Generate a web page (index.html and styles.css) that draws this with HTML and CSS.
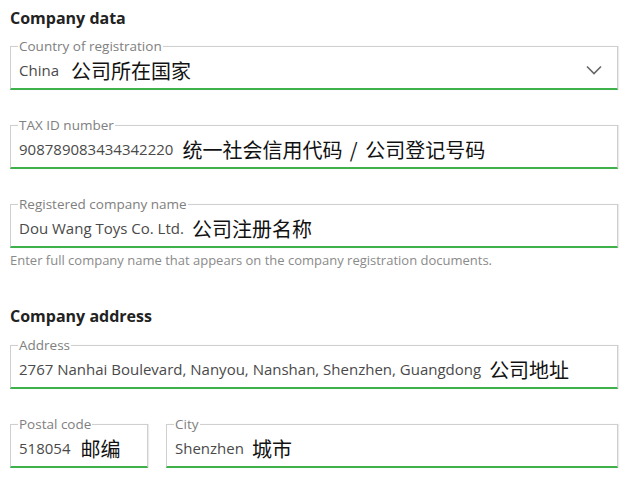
FILE: index.html
```html
<!DOCTYPE html>
<html>
<head>
<meta charset="utf-8">
<link rel="stylesheet" href="styles.css">
</head>
<body>
<div class="page">
  <h2 class="heading">Company data</h2>

  <fieldset class="field">
    <legend class="label">Country of registration</legend>
    <div class="row">
      <span class="value">China</span><span class="zh zh-wide">公司所在国家</span>
      <svg class="chevron" width="16" height="10" viewBox="0 0 16 10"><path d="M1 1.5 L8 8.5 L15 1.5" fill="none" stroke="#666" stroke-width="1.6"/></svg>
    </div>
  </fieldset>

  <fieldset class="field">
    <legend class="label">TAX ID number</legend>
    <div class="row">
      <span class="value">908789083434342220</span><span class="zh zh-spaced">统一社会信用代码 / 公司登记号码</span>
    </div>
  </fieldset>

  <fieldset class="field field-help">
    <legend class="label">Registered company name</legend>
    <div class="row">
      <span class="value">Dou Wang Toys Co. Ltd.</span><span class="zh">公司注册名称</span>
    </div>
  </fieldset>
  <p class="help">Enter full company name that appears on the company registration documents.</p>

  <h2 class="heading heading-second">Company address</h2>

  <fieldset class="field">
    <legend class="label">Address</legend>
    <div class="row">
      <span class="value">2767 Nanhai Boulevard, Nanyou, Nanshan, Shenzhen, Guangdong</span><span class="zh">公司地址</span>
    </div>
  </fieldset>

  <div class="pair">
    <fieldset class="field field-postal">
      <legend class="label">Postal code</legend>
      <div class="row">
        <span class="value">518054</span><span class="zh zh-mid">邮编</span>
      </div>
    </fieldset>
    <fieldset class="field field-city">
      <legend class="label">City</legend>
      <div class="row">
        <span class="value">Shenzhen</span><span class="zh">城市</span>
      </div>
    </fieldset>
  </div>
</div>
</body>
</html>
```
FILE: styles.css
```css
html, body {
  margin: 0;
  padding: 0;
  background: #ffffff;
}
body {
  font-family: "Open Sans", "Noto Sans", sans-serif;
  color: #444;
}
.page {
  padding: 0 18px 0 10px;
  display: flex;
  flex-direction: column;
}
.heading {
  margin: 8px 0 11px 0;
  font-size: 16px;
  line-height: 20px;
  font-weight: 700;
  color: #222;
}
.heading-second {
  margin-top: 37px;
  margin-bottom: 12px;
}
.field {
  margin: 0 0 28px 0;
  padding: 0 8px 0 8px;
  border: 1px solid #cfcfcf;
  border-bottom: 2px solid #3fb14b;
  box-shadow: 1px 0 1px rgba(0,0,0,0.08);
  min-width: 0;
}
.field-help {
  margin-bottom: 4px;
}
.label {
  padding: 0 1px;
  margin-left: -1px;
  font-size: 13.5px;
  line-height: 14px;
  color: #808080;
}
.row {
  display: flex;
  align-items: center;
  height: 34px;
  padding-bottom: 1px;
}
.value {
  font-size: 15px;
  color: #4a4a4a;
  white-space: nowrap;
}
.zh {
  font-family: "Noto Sans CJK SC", sans-serif;
  font-size: 20px;
  color: #111;
  margin-left: 8px;
  white-space: nowrap;
}
.zh-spaced {
  margin-left: 9px;
  word-spacing: 3px;
}
.zh-wide {
  margin-left: 12px;
}
.zh-mid {
  margin-left: 10px;
}
.chevron {
  margin-left: auto;
  margin-right: 7px;
}
.help {
  margin: 0;
  font-size: 13px;
  line-height: 17px;
  color: #8a8a8a;
}
.pair {
  display: flex;
  gap: 18px;
}
.field-postal {
  width: 138px;
  box-sizing: border-box;
  flex: none;
}
.field-city {
  flex: 1;
}
```
